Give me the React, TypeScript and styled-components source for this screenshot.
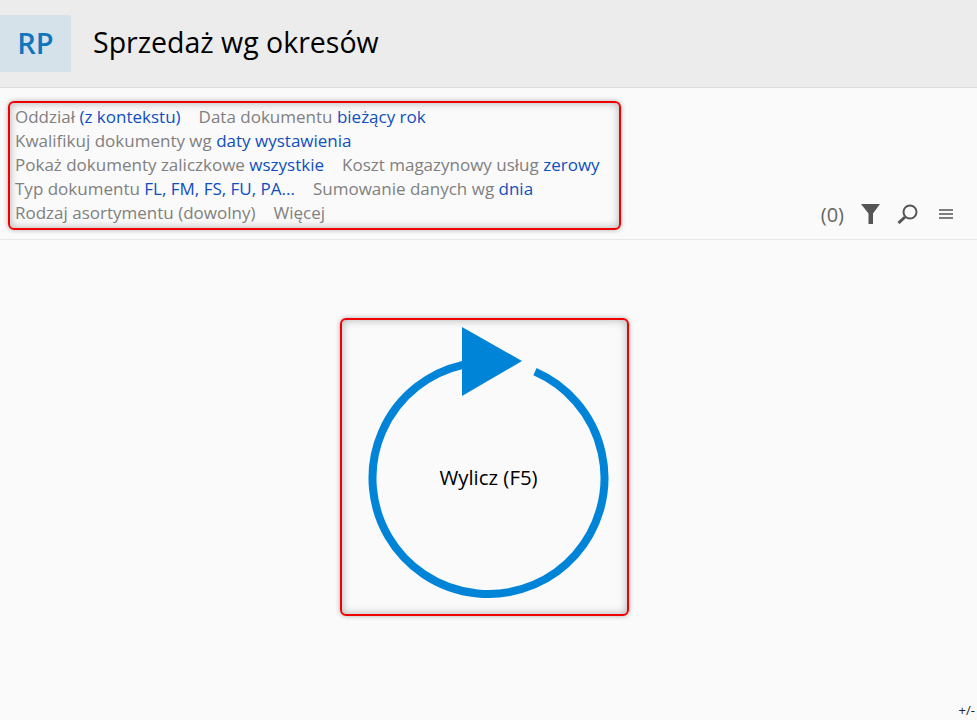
import styled, { createGlobalStyle } from 'styled-components';
import { Fragment } from 'react';

const GlobalStyle = createGlobalStyle`
  html, body {
    margin: 0;
    height: 100%;
    background: #fafafa;
    font-family: "Open Sans", "Noto Sans", "Liberation Sans", sans-serif;
  }
`;

const Page = styled.div`
  position: relative;
  height: 720px;
  overflow: hidden;
  background: #fafafa;
`;

const Header = styled.header`
  display: flex;
  align-items: center;
  gap: 22px;
  height: 88px;
  box-sizing: border-box;
  background: #ececec;
  border-bottom: 1px solid #dcdcdc;
`;

const Badge = styled.div`
  display: flex;
  align-items: center;
  justify-content: center;
  width: 71px;
  height: 57px;
  box-sizing: border-box;
  padding-bottom: 3px;
  background: #d6e2ea;
  color: #0f76bd;
  font-size: 29px;
  font-weight: 600;
`;

const Title = styled.h1`
  margin: 0 0 3px;
  color: #000;
  font-size: 28.5px;
  font-weight: 400;
`;

const FilterBar = styled.section`
  display: flex;
  justify-content: space-between;
  height: 152px;
  box-sizing: border-box;
  padding: 13px 24px 11px 8px;
  border-bottom: 1px solid #e8e8e8;
`;

const FilterBox = styled.div`
  width: 613px;
  height: 129px;
  box-sizing: border-box;
  padding: 2px 5px;
  border: 2px solid #f00000;
  border-radius: 6px;
  box-shadow: 0 0 5px rgba(0, 0, 0, 0.3), inset 0 0 8px rgba(0, 0, 0, 0.3);
`;

const FilterLine = styled.div`
  display: flex;
  gap: 18px;
  height: 24px;
  line-height: 24px;
  font-size: 17px;
  white-space: nowrap;
`;

const Label = styled.span`
  color: #808080;
`;

const Value = styled.span`
  color: #0f4fc0;
`;

const Tools = styled.div`
  align-self: flex-end;
  display: flex;
  align-items: center;
  gap: 17px;
  height: 28px;
`;

const Count = styled.span`
  font-size: 20px;
  color: #666;
`;

const MenuIcon = styled.svg`
  margin-left: 4px;
`;

const Canvas = styled.main`
  display: flex;
  justify-content: center;
`;

const RunBox = styled.div`
  display: grid;
  place-items: center;
  width: 289px;
  height: 298px;
  margin-top: 78px;
  margin-right: 8px;
  box-sizing: border-box;
  border: 2px solid #f00000;
  border-radius: 6px;
  box-shadow: 0 0 5px rgba(0, 0, 0, 0.3), inset 0 0 8px rgba(0, 0, 0, 0.3);
`;

const RunDrawing = styled.svg`
  grid-area: 1 / 1;
  display: block;
`;

const RunLabel = styled.span`
  grid-area: 1 / 1;
  margin-top: 20px;
  margin-left: 8px;
  font-size: 20.4px;
  color: #000;
`;

const Corner = styled.div`
  position: absolute;
  right: 2px;
  bottom: 1px;
  font-size: 13px;
  color: #222;
`;

type Pair = { label: string; value?: string };

const lines: Pair[][] = [
  [
    { label: 'Oddział', value: '(z kontekstu)' },
    { label: 'Data dokumentu', value: 'bieżący rok' },
  ],
  [{ label: 'Kwalifikuj dokumenty wg', value: 'daty wystawienia' }],
  [
    { label: 'Pokaż dokumenty zaliczkowe', value: 'wszystkie' },
    { label: 'Koszt magazynowy usług', value: 'zerowy' },
  ],
  [
    { label: 'Typ dokumentu', value: 'FL, FM, FS, FU, PA...' },
    { label: 'Sumowanie danych wg', value: 'dnia' },
  ],
  [{ label: 'Rodzaj asortymentu (dowolny)' }, { label: 'Więcej' }],
];

const App = () => {
  return (
    <Page>
      <GlobalStyle />
      <Header>
        <Badge>RP</Badge>
        <Title>Sprzedaż wg okresów</Title>
      </Header>
      <FilterBar>
        <FilterBox>
          {lines.map((line, i) => (
            <FilterLine key={i}>
              {line.map((pair) => (
                <span key={pair.label}>
                  <Label>{pair.label}</Label>
                  {pair.value && (
                    <Fragment>
                      {' '}
                      <Value>{pair.value}</Value>
                    </Fragment>
                  )}
                </span>
              ))}
            </FilterLine>
          ))}
        </FilterBox>
        <Tools>
          <Count>(0)</Count>
          <svg width="19" height="20" viewBox="0 0 19 20">
            <path d="M0 0h19l-7 9.5V20H7.5V9.5z" fill="#555" />
          </svg>
          <svg width="21" height="20" viewBox="0 0 21 20" fill="none" stroke="#555">
            <circle cx="13" cy="8" r="6.5" strokeWidth="2" />
            <path d="M8 13l-6.5 6" strokeWidth="3" />
          </svg>
          <MenuIcon width="14" height="10" viewBox="0 0 14 10" stroke="#555" strokeWidth="1.4">
            <path d="M0 1h14M0 5h14M0 9h14" />
          </MenuIcon>
        </Tools>
      </FilterBar>
      <Canvas>
        <RunBox>
          <RunDrawing width="285" height="294" viewBox="342 320 285 294">
            <path
              d="M535 371.7 A116 116 0 1 1 463 364.8"
              fill="none"
              stroke="#0084d8"
              strokeWidth="8"
            />
            <path d="M462 327 L522 361 L462 396 Z" fill="#0084d8" />
          </RunDrawing>
          <RunLabel>Wylicz (F5)</RunLabel>
        </RunBox>
      </Canvas>
      <Corner>+/-</Corner>
    </Page>
  );
};

export default App;
